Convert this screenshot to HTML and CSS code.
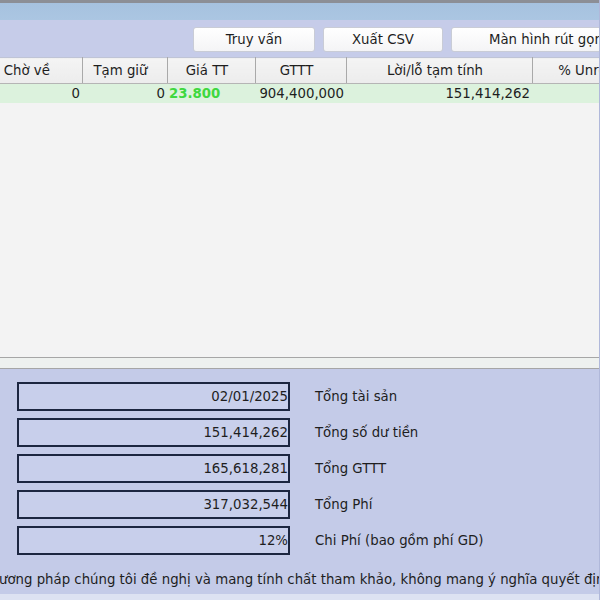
FILE: index.html
```html
<!DOCTYPE html>
<html lang="vi">
  <head>
    <meta charset="UTF-8" />
    <title>Danh mục</title>
    <link rel="stylesheet" href="styles.css">
  </head>
  <body>
    <div class="window">
      <div class="titlebar"></div>

      <div class="toolbar">
        <button class="btn btn-query">Truy vấn</button>
        <button class="btn btn-csv">Xuất CSV</button>
        <button class="btn btn-compact">Màn hình rút gọn</button>
      </div>

      <div class="grid">
        <table class="table">
          <colgroup>
            <col class="c-wait" />
            <col class="c-hold" />
            <col class="c-price" />
            <col class="c-value" />
            <col class="c-pnl" />
            <col class="c-pct" />
          </colgroup>
          <thead>
            <tr>
              <th>Chờ về</th>
              <th>Tạm giữ</th>
              <th>Giá TT</th>
              <th>GTTT</th>
              <th>Lời/lỗ tạm tính</th>
              <th>% Unrealized</th>
            </tr>
          </thead>
          <tbody>
            <tr class="row-selected">
              <td class="num">0</td>
              <td class="num">0</td>
              <td class="price">23.800</td>
              <td class="num">904,400,000</td>
              <td class="num">151,414,262</td>
              <td class="num"></td>
            </tr>
          </tbody>
        </table>
        <div class="grid-empty"></div>
      </div>

      <div class="splitter"></div>

      <div class="summary">
        <div class="field">
          <div class="field-box">02/01/2025</div>
          <div class="field-label">Tổng tài sản</div>
        </div>
        <div class="field">
          <div class="field-box">151,414,262</div>
          <div class="field-label">Tổng số dư tiền</div>
        </div>
        <div class="field">
          <div class="field-box">165,618,281</div>
          <div class="field-label">Tổng GTTT</div>
        </div>
        <div class="field">
          <div class="field-box">317,032,544</div>
          <div class="field-label">Tổng Phí</div>
        </div>
        <div class="field">
          <div class="field-box">12%</div>
          <div class="field-label">Chi Phí (bao gồm phí GD)</div>
        </div>

        <p class="note">ương pháp chúng tôi đề nghị và mang tính chất tham khảo, không mang ý nghĩa quyết định</p>
      </div>

      <div class="statusbar"></div>
    </div>
  </body>
</html>
```

FILE: styles.css
```css
* {
  margin: 0;
  padding: 0;
  box-sizing: border-box;
}
body {
  width: 600px;
  height: 600px;
  overflow: hidden;
  background: #c4cbe8;
  color: #1e1e1e;
  font-family: "DejaVu Sans", Verdana, sans-serif;
  font-size: 13.3px;
}
.window {
  display: flex;
  flex-direction: column;
  height: 600px;
  border-right: 1px solid #b0b8da;
}
/* thanh tiêu đề */
.titlebar {
  height: 20px;
  border-top: 3px solid #8c8f96;
  background: linear-gradient(#a6c2df, #abc6e2);
}
/* thanh nút */
.toolbar {
  height: 37px;
  display: flex;
  gap: 8px;
  padding: 7px 0 0 193px;
  background: #c6cce9;
  overflow: hidden;
}
.btn {
  flex: none;
  height: 25px;
  border: 1px solid #c9ccd6;
  border-radius: 3px;
  background: linear-gradient(#ffffff, #f4f4f6);
  font: inherit;
  color: #1e1e1e;
}
.btn-query {
  width: 122px;
}
.btn-csv {
  width: 120px;
}
.btn-compact {
  width: 170px;
  text-align: left;
  padding-left: 37px;
}
/* lưới dữ liệu */
.grid {
  height: 300px;
  background: #f3f3f3;
  overflow: hidden;
}
.table {
  table-layout: fixed;
  border-collapse: collapse;
  width: 700px;
  margin-left: -20px;
}
.c-wait { width: 102px; }
.c-hold { width: 85px; }
.c-price { width: 88px; }
.c-value { width: 91px; }
.c-pnl { width: 186px; }
.c-pct { width: 148px; }
.table th {
  height: 26px;
  font-weight: normal;
  background: linear-gradient(#f4f4f4, #ececec);
  border-right: 1px solid #a9a9a9;
  border-bottom: 1px solid #b5b5b5;
  border-top: 1px solid #bfc4d6;
  padding-right: 8px;
  white-space: nowrap;
}
.table td {
  height: 19px;
  padding: 0 2px;
  white-space: nowrap;
}
.row-selected td {
  background: #dcf2dd;
}
.num {
  text-align: right;
}
.price {
  color: #3fd83f;
  font-weight: bold;
  padding-left: 5px;
}
.splitter {
  height: 12px;
  border-top: 1px solid #a6a6a6;
  border-bottom: 1px solid #a6a6a6;
  background: #eef1ef;
}
/* khung tổng hợp */
.summary {
  flex: 1;
  padding: 13px 0 0 17px;
  display: flex;
  flex-direction: column;
  gap: 7px;
  background: #c4cbe8;
  overflow: hidden;
}
.field {
  display: flex;
  align-items: center;
  gap: 25px;
}
.field-box {
  width: 273px;
  height: 29px;
  border: 2px solid #1c2640;
  background: #c8cfeb;
  text-align: right;
  line-height: 25px;
  padding-right: 0;
}
.field-label {
  white-space: nowrap;
}
.note {
  margin: 10px 0 0 -18px;
  white-space: nowrap;
}
.statusbar {
  height: 6px;
  background: #dde2f2;
}
```
